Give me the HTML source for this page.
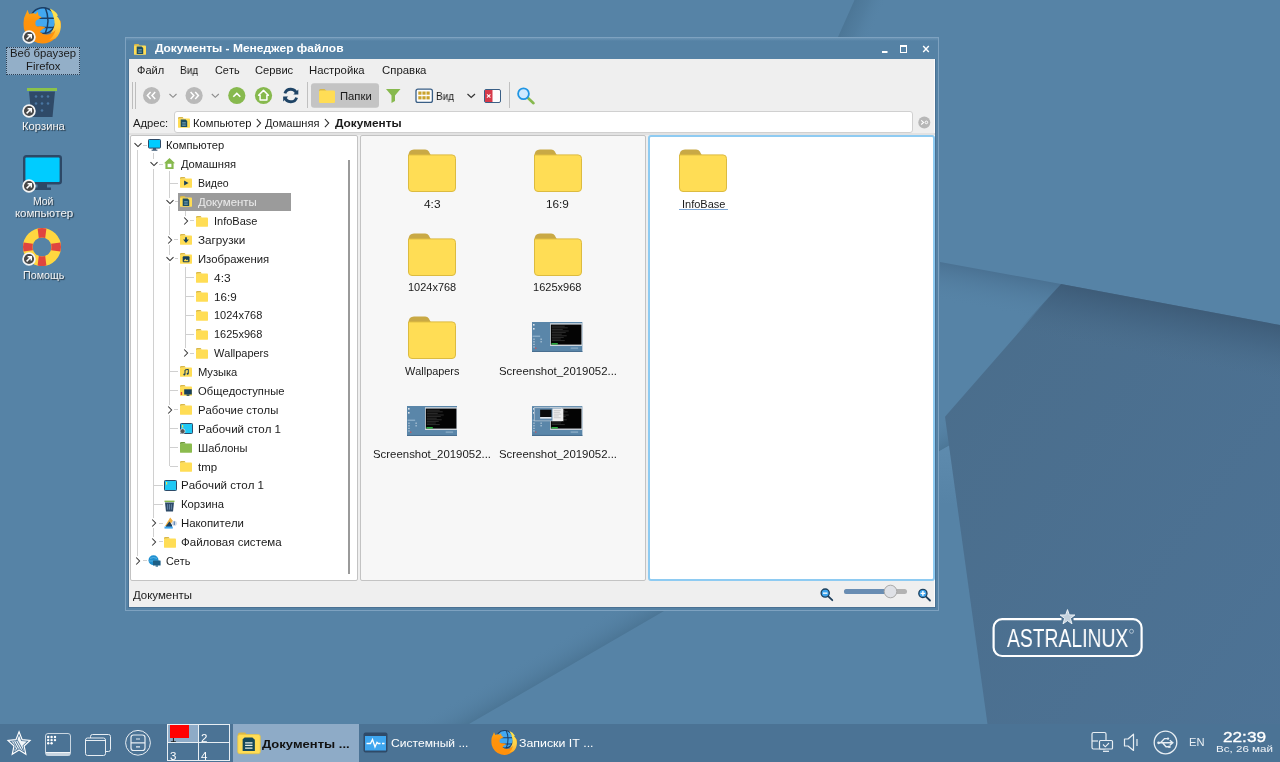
<!DOCTYPE html><html><head><meta charset="utf-8"><title>Astra Linux</title><style>

*{box-sizing:border-box;margin:0;padding:0}
html,body{width:1280px;height:762px;overflow:hidden;background:#5683a5}
body{font-family:"Liberation Sans",sans-serif;font-size:10.5px;color:#1a1a1a;position:relative;font-kerning:none}
.abs{position:absolute}
.t{position:absolute;white-space:nowrap;transform-origin:0 50%;will-change:transform}
.sh{text-shadow:1px 1px 1px rgba(0,0,0,.6)}
.win{position:absolute;left:125px;top:37px;width:814px;height:574px;background:linear-gradient(#6a93b4 0,#5582a5 3px);border:1px solid #7ea2c0}
.cont{position:absolute;left:129px;top:59px;width:806px;height:548px;background:#efefef}
.pane{position:absolute;border:1px solid #c3c3c3;border-radius:2px}
.vl{position:absolute;width:1px;background:#d0d0d0}
.hl{position:absolute;height:1px;background:#d0d0d0}

</style></head><body>
<svg width="0" height="0" style="position:absolute">
<defs>
  <linearGradient id="tailg" x1="0" y1="0" x2="0" y2="1"><stop offset="0" stop-color="#ffe650"/><stop offset=".6" stop-color="#ffd24a"/><stop offset="1" stop-color="#ffa61e"/></linearGradient>
  <linearGradient id="foxg" x1="0" y1="0" x2="0" y2="1"><stop offset="0" stop-color="#ffa616"/><stop offset=".35" stop-color="#ff930c"/><stop offset="1" stop-color="#ff900c"/></linearGradient>
  <symbol id="fold" viewBox="0 0 48 43">
    <path d="M0.5 6.5 Q0.5 0.5 6 0.5 L17.2 0.5 Q19.6 0.5 20.8 2.6 L23 6.5 L0.5 6.5 Z" fill="#c9a945"/>
    <path d="M0.5 5.9 L44 5.9 Q47.5 5.9 47.5 9.4 L47.5 39 Q47.5 42.5 44 42.5 L4 42.5 Q0.5 42.5 0.5 39 Z" fill="#ffdd55" stroke="#dcbb40" stroke-width="1"/>
  </symbol>
  <symbol id="sfold" viewBox="0 0 12 11">
    <path d="M0 1.3 Q0 0 1.3 0 L4.6 0 L5.8 1.6 L0 2 Z" fill="#d9b848"/>
    <rect x="0" y="1.4" width="12" height="9.4" rx="0.9" fill="#ffdd55"/>
  </symbol>
  <symbol id="gfold" viewBox="0 0 12 11">
    <path d="M0 1.3 Q0 0 1.3 0 L4.6 0 L5.8 1.6 L0 2 Z" fill="#6f9a3a"/>
    <rect x="0" y="1.4" width="12" height="9.4" rx="0.9" fill="#8bbb4e"/>
  </symbol>
  <symbol id="docfold" viewBox="0 0 12 11">
    <use href="#sfold"/>
    <path d="M2.7 2.6 L7.6 2.6 L9.2 4.1 L9.2 10 L2.7 10 Z" fill="#1b4d64"/>
    <path d="M4.2 5.6 H7.8 M4.2 7 H7.8 M4.2 8.4 H7.8" stroke="#7ea9b8" stroke-width="0.75"/>
  </symbol>
  <symbol id="vidfold" viewBox="0 0 12 11">
    <use href="#sfold"/>
    <path d="M4.1 3.4 L8.5 6 L4.1 8.6 Z" fill="#17405c"/>
  </symbol>
  <symbol id="dlfold" viewBox="0 0 12 11">
    <use href="#sfold"/>
    <path d="M5.1 3.2 H6.9 V5.6 H8.9 L6 8.9 L3.1 5.6 H5.1 Z" fill="#17405c"/>
  </symbol>
  <symbol id="imgfold" viewBox="0 0 12 11">
    <use href="#sfold"/>
    <rect x="2.7" y="3.2" width="6.8" height="6" rx="1" fill="#17405c"/>
    <path d="M3.5 8.3 L5.3 5.8 L6.6 7.2 L7.4 6.5 L8.7 8.3 Z" fill="#ffdd55"/>
  </symbol>
  <symbol id="musfold" viewBox="0 0 12 11">
    <use href="#sfold"/>
    <path d="M5 4 L8.3 3.3 V7.6 M5 4 V8.4" stroke="#17405c" stroke-width="1" fill="none"/>
    <circle cx="4.3" cy="8.5" r="1" fill="#17405c"/><circle cx="7.6" cy="7.7" r="1" fill="#17405c"/>
  </symbol>
  <symbol id="pubfold" viewBox="0 0 12 11">
    <use href="#sfold"/>
    <rect x="4.2" y="4.3" width="7.6" height="5.2" fill="#17405c"/>
    <rect x="6.6" y="9.5" width="2.8" height="1.3" fill="#17405c"/>
    <rect x="0.8" y="7" width="1.3" height="3" fill="#e0463c"/>
  </symbol>
  <symbol id="monitor" viewBox="0 0 13 12">
    <rect x="0.5" y="0.5" width="12" height="8.6" rx="0.8" fill="#00ccff" stroke="#2d4a68" stroke-width="1"/>
    <rect x="5" y="9.2" width="3" height="1.6" fill="#2d4a68"/>
    <rect x="3.6" y="10.6" width="5.8" height="1.1" fill="#2d4a68"/>
  </symbol>
  <symbol id="house" viewBox="0 0 11 11">
    <path d="M5.5 0 L11 5.2 H9.6 V11 H1.4 V5.2 H0 Z" fill="#87b94e"/>
    <rect x="3.6" y="5.8" width="3.8" height="3.4" fill="#fff"/>
  </symbol>
  <symbol id="desk" viewBox="0 0 13 11">
    <rect x="0.5" y="0.5" width="12" height="10" rx="0.8" fill="#1ec8f5" stroke="#2d4a68" stroke-width="1"/>
    <rect x="2" y="2" width="1.2" height="2.6" fill="#f6e04a"/>
  </symbol>
  <symbol id="deskl" viewBox="0 0 13 11">
    <use href="#desk"/>
    <circle cx="2.6" cy="8.2" r="2.5" fill="#555" stroke="#eee" stroke-width=".7"/>
  </symbol>
  <symbol id="trashs" viewBox="0 0 11 12">
    <rect x="0.5" y="0.6" width="10" height="1.5" fill="#87b94e"/>
    <path d="M1 2.6 H10 L9 11.5 H2 Z" fill="#2d4a68"/>
    <path d="M3.6 4.2 V9.6 M5.5 4.2 V9.6 M7.4 4.2 V9.6" stroke="#7d9cc0" stroke-width="0.7"/>
  </symbol>
  <symbol id="drives" viewBox="0 0 13 12">
    <path d="M1 9 L6.2 0.6 L9 4 L4 10 Z" fill="#f0b040"/>
    <path d="M2 9 L5.5 4.5 L8 8 L8 10 L2 10 Z" fill="#1d3f5c"/>
    <path d="M0.5 9.5 H8.8 V11.6 H0.5 Z" fill="#3ea6ef"/>
    <circle cx="10.3" cy="6.3" r="2.6" fill="#d4dbe4"/>
    <rect x="9.7" y="4.4" width="1.2" height="3.6" fill="#5b86b8"/>
  </symbol>
  <symbol id="net" viewBox="0 0 13 12">
    <circle cx="5.5" cy="5.2" r="5" fill="#1d8fd0"/>
    <path d="M2 3.4 Q5.5 1.6 9 3.4 M1 6 H10" stroke="#6fc0ec" stroke-width="0.7" fill="none"/>
    <rect x="5" y="5.4" width="7.6" height="5" rx="0.5" fill="#1d5f86"/>
    <rect x="7.6" y="10.4" width="2.4" height="1.2" fill="#1d5f86"/>
  </symbol>
  <symbol id="short" viewBox="0 0 14 14">
    <circle cx="7" cy="7" r="5.9" fill="#484848" stroke="#f4f4f4" stroke-width="1.7"/>
    <path d="M4.6 9.4 L9 5 M5.6 4.7 H9.3 V8.4" stroke="#fff" stroke-width="1.5" fill="none"/>
  </symbol>
  <symbol id="ffox" viewBox="0 0 38 37">
    <circle cx="20" cy="13.6" r="12.9" fill="#42a8f0"/>
    <path d="M8 11.2 H32.5 M9 20.4 H31.5 M22.3 0.8 Q27.6 13.6 22.3 26.4" stroke="#1c3f66" stroke-width="1.5" fill="none"/>
    <circle cx="20" cy="13.6" r="12.9" fill="none" stroke="#1c3f66" stroke-width="1.5"/>
    <path d="M4.3 2.8 L6.3 7.2 Q9.5 5.6 13 7 L14.6 4.6 L15.6 8.6 L18.6 10.2 L15 12.4 Q12.4 13 12.4 16 Q12.2 19.4 15 19.4 Q19 19 22.6 20.6 Q19 21.8 16.6 24.8 Q21 29 27 27 Q32 25 34 19 Q35.5 15 34 10.5 L37.6 14 Q38.6 24 32 31.5 Q25 38 15 36 Q4 33 1 22 Q-0.5 12 2.5 7.5 Q3.8 5.5 4.3 2.8 Z" fill="url(#foxg)"/>
    <path d="M26.8 1.6 Q32 3.5 35 8.5 L33.8 9 Q38 13 37.8 20 Q37.5 27 32.5 31.5 L26 33.2 Q31 29 32.6 23 Q30.5 25.6 27.5 26.4 Q32.6 20 31.4 13.4 Q30.8 7.5 26.8 1.6 Z" fill="url(#tailg)"/>
  </symbol>
  <symbol id="thumb0" viewBox="0 0 51 30.4" preserveAspectRatio="none">
    <rect width="51" height="30.4" fill="#5a86a9"/>
    <rect x="0" y="29" width="51" height="1.4" fill="#486e90"/>
    <rect x="18.2" y="1.2" width="32.3" height="22.8" fill="#cfd6dd"/>
    <rect x="19" y="2.6" width="30.8" height="20" fill="#040404"/>
    <g stroke="#4a4a4a" stroke-width=".6"><path d="M20 4.2 H33 M20 5.8 H36 M20 7.4 H31 M20 9 H37 M20 10.6 H34 M20 12.2 H30 M20 13.8 H35 M20 15.4 H32 M20 17 H29 M20 18.6 H33"/></g>
    <rect x="19.6" y="21.2" width="6.4" height="1.3" fill="#35d04c"/>
    <rect x="39" y="25.3" width="7.5" height="1.8" fill="#7fa3bf"/>
    <g fill="#dfe6ec"><rect x="1" y="2" width="1.6" height="1.6"/><rect x="1" y="6" width="1.6" height="1.6"/></g>
    <rect x="0.6" y="13.6" width="7.6" height="1.3" fill="#8fb0cb"/>
    <g fill="#c8d7e4"><rect x="1.4" y="16.6" width="1.2" height="1.2"/><rect x="1.4" y="19.2" width="1.2" height="1.2"/><rect x="1.4" y="21.8" width="1.2" height="1.2"/><rect x="1.4" y="24.4" width="1.2" height="1.2"/><rect x="8.6" y="16.6" width="1.2" height="1.2"/><rect x="8.6" y="19.2" width="1.2" height="1.2"/></g>
    <rect x="3.2" y="25.6" width="1.2" height="1.2" fill="#e04a4a"/>
  </symbol>
  <symbol id="thumb2" viewBox="0 0 51 30.4">
    <use href="#thumb0"/>
    <rect x="2" y="1.2" width="28" height="14" fill="#c9d3dd"/>
    <rect x="2.6" y="2" width="26.8" height="12.6" fill="#5f88aa"/>
    <rect x="8.2" y="3.6" width="11.4" height="7.4" fill="#0a0a0a"/>
    <rect x="8.2" y="11" width="11.4" height="1.6" fill="#e4e8ec"/>
    <rect x="20.6" y="2.4" width="11" height="12.6" fill="#eeeeee"/>
    <g stroke="#aaa" stroke-width=".5"><path d="M22 4.5 H29 M22 6.3 H28 M22 8.1 H29.5 M22 9.9 H27 M22 11.7 H29"/></g>
  </symbol>
</defs>
</svg>

<svg class="abs" style="left:0;top:0" width="1280" height="762" viewBox="0 0 1280 762">
<defs>
<linearGradient id="pg" x1="0" y1="0" x2="1" y2="1"><stop offset="0" stop-color="#4a6d8b"/><stop offset="1" stop-color="#4d7396"/></linearGradient>
<linearGradient id="sh" gradientUnits="userSpaceOnUse" x1="1110" y1="293" x2="1100" y2="347"><stop offset="0" stop-color="#3d5b77" stop-opacity=".95"/><stop offset=".4" stop-color="#426381" stop-opacity=".7"/><stop offset="1" stop-color="#4a6d8b" stop-opacity="0"/></linearGradient>
<linearGradient id="sh2" gradientUnits="userSpaceOnUse" x1="1000" y1="273" x2="993" y2="311"><stop offset="0" stop-color="#4a7192" stop-opacity=".95"/><stop offset="1" stop-color="#5683a6" stop-opacity="0"/></linearGradient>
<linearGradient id="sh3" gradientUnits="userSpaceOnUse" x1="846" y1="18" x2="873.4" y2="30.2"><stop offset="0" stop-color="#4b7595" stop-opacity=".95"/><stop offset=".45" stop-color="#4f7a9b" stop-opacity=".7"/><stop offset="1" stop-color="#5683a6" stop-opacity="0"/></linearGradient>
<linearGradient id="lt1" x1="0" y1="0" x2="0" y2="1"><stop offset="0" stop-color="#5e8bae"/><stop offset="1" stop-color="#5683a6"/></linearGradient>
<linearGradient id="sh4" gradientUnits="userSpaceOnUse" x1="565" y1="668.3" x2="551" y2="644.1"><stop offset="0" stop-color="#4b7595" stop-opacity=".95"/><stop offset="1" stop-color="#5683a6" stop-opacity="0"/></linearGradient>
</defs>
<rect width="1280" height="762" fill="#5683a6"/>
<polygon points="854.5,0 838,37 874,37 890.5,0" fill="url(#sh3)"/>
<polygon points="400,764 962,438.2 948,414 386,739.8" fill="url(#sh4)"/>
<polygon points="936,453.1 951,444.4 958,505 936,505" fill="url(#lt1)"/>
<polygon points="940,262 1061,284 945,416.8 940,420" fill="url(#sh2)"/>
<polygon points="1061,284 1280,325 1280,762 992.7,762 945,416.8" fill="url(#pg)"/>
<polygon points="1061,284 1280,325 1280,390 1000,350" fill="url(#sh)"/>
</svg>
<svg class="abs" style="left:23px;top:6.5px" width="38" height="37"><use href="#ffox"/></svg>
<svg class="abs" style="left:22.4px;top:30.3px" width="14" height="14"><use href="#short"/></svg>
<div class="abs" style="left:6px;top:47px;width:73.8px;height:28px;background:#93afc8;border:1px dotted #2a3f55"></div>
<div class="t" style="left:10.20px;top:46.16px;font-size:10.5px;line-height:14px;height:14px;color:#1a1a1a;transform:scaleX(1.0780);">Веб браузер</div>
<div class="t" style="left:25.75px;top:59.36px;font-size:10.5px;line-height:14px;height:14px;color:#1a1a1a;transform:scaleX(1.0752);">Firefox</div>
<svg class="abs" style="left:27px;top:87px" width="31" height="31" viewBox="0 0 31 31">
<rect x="0" y="1" width="30" height="3" fill="#8bc34a"/>
<path d="M2 4.5 H28 L25.5 30 H4.5 Z" fill="#2f4a68"/>
<g fill="#4a76a2"><circle cx="9" cy="9.5" r="1.3"/><circle cx="15" cy="9.5" r="1.3"/><circle cx="21" cy="9.5" r="1.3"/><circle cx="9" cy="16.5" r="1.3"/><circle cx="15" cy="16.5" r="1.3"/><circle cx="21" cy="16.5" r="1.3"/><circle cx="15" cy="23.5" r="1.3"/></g>
</svg>
<svg class="abs" style="left:22.4px;top:104px" width="14" height="14"><use href="#short"/></svg>
<div class="t" style="left:21.95px;top:119.36px;font-size:10.5px;line-height:14px;height:14px;color:#f4f4f4;transform:scaleX(1.0677);text-shadow:1px 1px 1px rgba(0,0,0,.6);">Корзина</div>
<svg class="abs" style="left:23px;top:155px" width="39" height="36" viewBox="0 0 39 36">
<rect x="1.2" y="1.2" width="36.6" height="27" rx="2" fill="#00ccff" stroke="#2d4866" stroke-width="2.4"/>
<rect x="14.5" y="29" width="9.5" height="4" fill="#2d4866"/>
<rect x="11.5" y="32.5" width="16.5" height="2.5" fill="#2d4866"/>
</svg>
<svg class="abs" style="left:22.4px;top:178.6px" width="14" height="14"><use href="#short"/></svg>
<div class="t" style="left:33.00px;top:193.96px;font-size:10.5px;line-height:14px;height:14px;color:#f4f4f4;transform:scaleX(1.0015);text-shadow:1px 1px 1px rgba(0,0,0,.6);">Мой</div>
<div class="t" style="left:14.60px;top:206.16px;font-size:10.5px;line-height:14px;height:14px;color:#f4f4f4;transform:scaleX(1.0956);text-shadow:1px 1px 1px rgba(0,0,0,.6);">компьютер</div>
<svg class="abs" style="left:22px;top:227px" width="40" height="40" viewBox="0 0 40 40">
<circle cx="20" cy="20" r="14.2" fill="none" stroke="#ffd740" stroke-width="9.6"/>
<g fill="#e0453f"><path d="M15.6 1.6 Q20 0.4 24.4 1.6 L23.2 10.9 Q20 10.2 16.8 10.9 Z"/><path d="M15.6 38.4 Q20 39.6 24.4 38.4 L23.2 29.1 Q20 29.8 16.8 29.1 Z"/><path d="M1.6 15.6 Q0.4 20 1.6 24.4 L10.9 23.2 Q10.2 20 10.9 16.8 Z"/><path d="M38.4 15.6 Q39.6 20 38.4 24.4 L29.1 23.2 Q29.8 20 29.1 16.8 Z"/></g>
</svg>
<svg class="abs" style="left:22.2px;top:252.2px" width="14" height="14"><use href="#short"/></svg>
<div class="t" style="left:22.95px;top:267.56px;font-size:10.5px;line-height:14px;height:14px;color:#f4f4f4;transform:scaleX(1.0184);text-shadow:1px 1px 1px rgba(0,0,0,.6);">Помощь</div>
<div class="win"></div>
<svg class="abs" style="left:134px;top:44px" width="12" height="11"><use href="#docfold"/></svg>
<div class="t" style="left:154.80px;top:40.76px;font-size:10.5px;line-height:14px;height:14px;font-weight:bold;color:#fff;transform:scaleX(1.1395);">Документы - Менеджер файлов</div>
<svg class="abs" style="left:878px;top:42px" width="56" height="14" viewBox="0 0 56 14">
<rect x="4" y="9" width="5.5" height="2" fill="#fff"/>
<rect x="22.5" y="4" width="6" height="6.5" fill="none" stroke="#fff" stroke-width="1"/><rect x="22" y="3" width="7" height="2" fill="#fff"/>
<path d="M45.2 4 L50.8 10 M50.8 4 L45.2 10" stroke="#fff" stroke-width="1.4"/>
</svg>
<div class="abs" style="left:128px;top:59px;width:808px;height:549px;background:#4a7193"></div>
<div class="cont"></div>
<div class="abs" style="left:934px;top:59px;width:1px;height:548px;background:#fbfbfb"></div>
<div class="t" style="left:137.00px;top:62.76px;font-size:10.5px;line-height:14px;height:14px;color:#1a1a1a;transform:scaleX(1.0537);">Файл</div>
<div class="t" style="left:180.00px;top:62.76px;font-size:10.5px;line-height:14px;height:14px;color:#1a1a1a;transform:scaleX(0.9634);">Вид</div>
<div class="t" style="left:214.50px;top:62.76px;font-size:10.5px;line-height:14px;height:14px;color:#1a1a1a;transform:scaleX(1.0363);">Сеть</div>
<div class="t" style="left:254.70px;top:62.76px;font-size:10.5px;line-height:14px;height:14px;color:#1a1a1a;transform:scaleX(1.0625);">Сервис</div>
<div class="t" style="left:309.20px;top:62.76px;font-size:10.5px;line-height:14px;height:14px;color:#1a1a1a;transform:scaleX(1.0776);">Настройка</div>
<div class="t" style="left:381.50px;top:62.76px;font-size:10.5px;line-height:14px;height:14px;color:#1a1a1a;transform:scaleX(1.0852);">Справка</div>
<div class="abs" style="left:132px;top:82px;width:1px;height:27px;background:#bdbdbd"></div>
<div class="abs" style="left:135px;top:82px;width:1px;height:27px;background:#bdbdbd"></div>
<svg class="abs" style="left:140px;top:80px" width="400" height="32" viewBox="140 80 400 32">
<circle cx="151.6" cy="95.5" r="8.6" fill="#b9b9b9"/>
<path d="M150.6 92 L147.4 95.5 L150.6 99 M155.2 92 L152 95.5 L155.2 99" stroke="#fff" stroke-width="1.5" fill="none"/>
<path d="M169.5 94 L173 97.3 L176.5 94" stroke="#8c8c8c" stroke-width="1.1" fill="none"/>
<circle cx="194.1" cy="95.5" r="8.6" fill="#b9b9b9"/>
<path d="M190.6 92 L193.8 95.5 L190.6 99 M195.2 92 L198.4 95.5 L195.2 99" stroke="#fff" stroke-width="1.5" fill="none"/>
<path d="M211.8 94 L215.3 97.3 L218.8 94" stroke="#8c8c8c" stroke-width="1.1" fill="none"/>
<circle cx="236.8" cy="95.5" r="8.6" fill="#87b94e"/>
<path d="M233.3 96.8 L236.8 93.4 L240.3 96.8" stroke="#fff" stroke-width="1.6" fill="none"/>
<circle cx="263.5" cy="95.5" r="8.6" fill="#87b94e"/>
<path d="M263.5 90.4 L268.4 95.2 H266.9 V100 H260.1 V95.2 H258.6 Z" fill="none" stroke="#fff" stroke-width="1.5" stroke-linejoin="round"/>
<path d="M296.6 93.8 A6.1 6.1 0 0 0 284.9 93.4" stroke="#1f4466" stroke-width="2.9" fill="none"/>
<path d="M284.9 97.2 A6.1 6.1 0 0 0 296.6 97.6" stroke="#1f4466" stroke-width="2.9" fill="none"/>
<path d="M298.3 89.6 V94.6 H293.3 Z" fill="#1f4466"/>
<path d="M283.2 101.4 V96.4 H288.2 Z" fill="#1f4466"/>
<rect x="307" y="82" width="1" height="26" fill="#c0c0c0"/>
<rect x="311" y="83.2" width="68" height="24.5" rx="3" fill="#c4c4c4"/>
<path d="M319 90.5 Q319 89 320.5 89 L324.5 89 L326.5 91 L319 91.5 Z" fill="#d9b848"/>
<rect x="319" y="90.6" width="16" height="12.4" rx="1.2" fill="#ffdd55"/>
<path d="M386 89 H400.5 L395 95.5 V101 L391.5 103 V95.5 Z" fill="#87b94e"/>
<rect x="416" y="89.2" width="16.4" height="13.2" rx="2" fill="#fdfdfd" stroke="#3a5f86" stroke-width="1.3"/>
<g fill="#caa22c"><rect x="418.3" y="91.5" width="3.2" height="3.2"/><rect x="422.4" y="91.5" width="3.2" height="3.2"/><rect x="426.5" y="91.5" width="3.2" height="3.2"/><rect x="418.3" y="96.2" width="3.2" height="3.2"/><rect x="422.4" y="96.2" width="3.2" height="3.2"/><rect x="426.5" y="96.2" width="3.2" height="3.2"/></g>
<path d="M467.5 94 L471.2 97.5 L475 94" stroke="#333" stroke-width="1.2" fill="none"/>
<rect x="484.5" y="89.5" width="16" height="13" rx="1.5" fill="#fdfdfd" stroke="#3a5f86" stroke-width="1"/>
<rect x="485" y="90" width="7.5" height="12" fill="#d63a4a"/>
<path d="M487 94.3 L490.4 97.7 M490.4 94.3 L487 97.7" stroke="#fff" stroke-width="1.1"/>
<rect x="509" y="82" width="1" height="26" fill="#c0c0c0"/>
<path d="M527.5 97.5 L533.5 103.2" stroke="#87b94e" stroke-width="2.6" stroke-linecap="round"/>
<circle cx="523.5" cy="93.8" r="5.4" fill="#cfeaff" stroke="#2196e3" stroke-width="1.8"/>
</svg>

<div class="t" style="left:339.50px;top:88.56px;font-size:10.5px;line-height:14px;height:14px;color:#1a1a1a;transform:scaleX(1.0734);">Папки</div>
<div class="t" style="left:436.00px;top:88.56px;font-size:10.5px;line-height:14px;height:14px;color:#1a1a1a;transform:scaleX(0.9581);">Вид</div>
<div class="t" style="left:133.20px;top:115.56px;font-size:10.5px;line-height:14px;height:14px;color:#1a1a1a;transform:scaleX(1.0675);">Адрес:</div>
<div class="abs" style="left:174px;top:111px;width:739px;height:22px;background:#fff;border:1px solid #d0d0d0;border-radius:3px"></div>
<svg class="abs" style="left:178px;top:117px" width="12" height="11"><use href="#docfold"/></svg>
<div class="t" style="left:192.50px;top:115.56px;font-size:10.5px;line-height:14px;height:14px;color:#1a1a1a;transform:scaleX(1.0673);">Компьютер</div>
<svg class="abs" style="left:254px;top:116px" width="10" height="14" viewBox="254 116 10 14"><path d="M256.8 119 L260.6 123.1 L256.8 127.2" stroke="#2a2a2a" stroke-width="1.1" fill="none"/></svg>
<div class="t" style="left:264.50px;top:115.56px;font-size:10.5px;line-height:14px;height:14px;color:#1a1a1a;transform:scaleX(1.0538);">Домашняя</div>
<svg class="abs" style="left:322px;top:116px" width="10" height="14" viewBox="322 116 10 14"><path d="M324.9 119 L328.7 123.1 L324.9 127.2" stroke="#2a2a2a" stroke-width="1.1" fill="none"/></svg>
<div class="t" style="left:335.00px;top:115.56px;font-size:10.5px;line-height:14px;height:14px;font-weight:bold;color:#1a1a1a;transform:scaleX(1.1298);">Документы</div>
<svg class="abs" style="left:918px;top:116px" width="13" height="13" viewBox="0 0 13 13"><circle cx="6.3" cy="6.4" r="6" fill="#b7b7b7"/><path d="M3.2 4.3 L5.6 6.4 L3.2 8.5" stroke="#fff" stroke-width="1.1" fill="none"/><circle cx="8.4" cy="6.4" r="1.3" fill="none" stroke="#fff" stroke-width="1"/></svg>
<div class="abs" style="left:129px;top:132.5px;width:806px;height:2px;background:#e2e2e2"></div>
<div class="pane" style="left:130px;top:135px;width:228px;height:446px;background:#fff"></div>
<div class="pane" style="left:360px;top:135px;width:286px;height:446px;background:#f7f7f7"></div>
<div class="pane" style="left:648px;top:135px;width:287px;height:446px;background:#fff;border:2px solid #8ecbf2;border-radius:3px"></div>
<div class="abs" style="left:348px;top:160px;width:2px;height:414px;background:#9a9a9a"></div>
<div class="vl" style="left:137.1px;top:150.3px;height:410.5800000000001px"></div>
<div class="vl" style="left:153.0px;top:169.19px;height:372.8px"></div>
<div class="vl" style="left:153.0px;top:153.3px;height:6px"></div>
<div class="vl" style="left:168.9px;top:171.19px;height:295.24px"></div>
<div class="vl" style="left:184.8px;top:210.97000000000003px;height:6px"></div>
<div class="vl" style="left:184.8px;top:266.64px;height:82.45000000000005px"></div>
<div class="hl" style="left:142.6px;top:144.80px;width:4px"></div>
<svg class="abs" style="left:133.3px;top:141.30px;background:#fff;" width="10" height="8" viewBox="0 0 10 8"><path d="M1.5 2.2 L5 5.6 L8.5 2.2" stroke="#333" stroke-width="1.05" fill="none"/></svg>
<svg class="abs" style="left:148.2px;top:139.10px" width="13" height="12"><use href="#monitor"/></svg>
<div class="t" style="left:165.80px;top:138.46px;font-size:10.5px;line-height:14px;height:14px;color:#1a1a1a;transform:scaleX(1.0636);">Компьютер</div>
<div class="hl" style="left:158.5px;top:163.69px;width:4px"></div>
<svg class="abs" style="left:149.2px;top:160.19px;background:#fff;" width="10" height="8" viewBox="0 0 10 8"><path d="M1.5 2.2 L5 5.6 L8.5 2.2" stroke="#333" stroke-width="1.05" fill="none"/></svg>
<svg class="abs" style="left:164.1px;top:158.49px" width="11" height="11"><use href="#house"/></svg>
<div class="t" style="left:181.10px;top:157.35px;font-size:10.5px;line-height:14px;height:14px;color:#1a1a1a;transform:scaleX(1.0673);">Домашняя</div>
<div class="hl" style="left:169.9px;top:182.58px;width:8.5px"></div>
<svg class="abs" style="left:180.0px;top:177.38px" width="12" height="11"><use href="#vidfold"/></svg>
<div class="t" style="left:197.60px;top:176.24px;font-size:10.5px;line-height:14px;height:14px;color:#1a1a1a;transform:scaleX(0.9944);">Видео</div>
<div class="abs" style="left:178px;top:192.57px;width:113px;height:18.6px;background:#9b9b9b"></div>
<div class="hl" style="left:174.4px;top:201.47px;width:4px"></div>
<svg class="abs" style="left:165.1px;top:197.97px;background:#fff;" width="10" height="8" viewBox="0 0 10 8"><path d="M1.5 2.2 L5 5.6 L8.5 2.2" stroke="#333" stroke-width="1.05" fill="none"/></svg>
<svg class="abs" style="left:180.0px;top:196.27px" width="12" height="11"><use href="#docfold"/></svg>
<div class="t" style="left:197.60px;top:195.13px;font-size:10.5px;line-height:14px;height:14px;color:#ececec;transform:scaleX(1.0883);">Документы</div>
<div class="hl" style="left:190.3px;top:220.36px;width:4px"></div>
<svg class="abs" style="left:182.0px;top:215.86px;background:#fff;" width="8" height="10" viewBox="0 0 8 10"><path d="M2.2 1.5 L5.6 5 L2.2 8.5" stroke="#333" stroke-width="1.05" fill="none"/></svg>
<svg class="abs" style="left:195.9px;top:215.56px" width="12" height="11"><use href="#sfold"/></svg>
<div class="t" style="left:213.50px;top:214.02px;font-size:10.5px;line-height:14px;height:14px;color:#1a1a1a;transform:scaleX(1.0472);">InfoBase</div>
<div class="hl" style="left:174.4px;top:239.25px;width:4px"></div>
<svg class="abs" style="left:166.1px;top:234.75px;background:#fff;" width="8" height="10" viewBox="0 0 8 10"><path d="M2.2 1.5 L5.6 5 L2.2 8.5" stroke="#333" stroke-width="1.05" fill="none"/></svg>
<svg class="abs" style="left:180.0px;top:234.05px" width="12" height="11"><use href="#dlfold"/></svg>
<div class="t" style="left:197.60px;top:232.91px;font-size:10.5px;line-height:14px;height:14px;color:#1a1a1a;transform:scaleX(1.1147);">Загрузки</div>
<div class="hl" style="left:174.4px;top:258.14px;width:4px"></div>
<svg class="abs" style="left:165.1px;top:254.64px;background:#fff;" width="10" height="8" viewBox="0 0 10 8"><path d="M1.5 2.2 L5 5.6 L8.5 2.2" stroke="#333" stroke-width="1.05" fill="none"/></svg>
<svg class="abs" style="left:180.0px;top:252.94px" width="12" height="11"><use href="#imgfold"/></svg>
<div class="t" style="left:197.60px;top:251.80px;font-size:10.5px;line-height:14px;height:14px;color:#1a1a1a;transform:scaleX(1.0760);">Изображения</div>
<div class="hl" style="left:185.8px;top:277.03px;width:8.5px"></div>
<svg class="abs" style="left:195.9px;top:272.23px" width="12" height="11"><use href="#sfold"/></svg>
<div class="t" style="left:213.50px;top:270.69px;font-size:10.5px;line-height:14px;height:14px;color:#1a1a1a;transform:scaleX(1.1374);">4:3</div>
<div class="hl" style="left:185.8px;top:295.92px;width:8.5px"></div>
<svg class="abs" style="left:195.9px;top:291.12px" width="12" height="11"><use href="#sfold"/></svg>
<div class="t" style="left:213.50px;top:289.58px;font-size:10.5px;line-height:14px;height:14px;color:#1a1a1a;transform:scaleX(1.1060);">16:9</div>
<div class="hl" style="left:185.8px;top:314.81px;width:8.5px"></div>
<svg class="abs" style="left:195.9px;top:310.01px" width="12" height="11"><use href="#sfold"/></svg>
<div class="t" style="left:213.50px;top:308.47px;font-size:10.5px;line-height:14px;height:14px;color:#1a1a1a;transform:scaleX(1.0472);">1024x768</div>
<div class="hl" style="left:185.8px;top:333.70px;width:8.5px"></div>
<svg class="abs" style="left:195.9px;top:328.90px" width="12" height="11"><use href="#sfold"/></svg>
<div class="t" style="left:213.50px;top:327.36px;font-size:10.5px;line-height:14px;height:14px;color:#1a1a1a;transform:scaleX(1.0472);">1625x968</div>
<div class="hl" style="left:190.3px;top:352.59px;width:4px"></div>
<svg class="abs" style="left:182.0px;top:348.09px;background:#fff;" width="8" height="10" viewBox="0 0 8 10"><path d="M2.2 1.5 L5.6 5 L2.2 8.5" stroke="#333" stroke-width="1.05" fill="none"/></svg>
<svg class="abs" style="left:195.9px;top:347.79px" width="12" height="11"><use href="#sfold"/></svg>
<div class="t" style="left:213.50px;top:346.25px;font-size:10.5px;line-height:14px;height:14px;color:#1a1a1a;transform:scaleX(1.0416);">Wallpapers</div>
<div class="hl" style="left:169.9px;top:371.48px;width:8.5px"></div>
<svg class="abs" style="left:180.0px;top:366.28px" width="12" height="11"><use href="#musfold"/></svg>
<div class="t" style="left:197.60px;top:365.14px;font-size:10.5px;line-height:14px;height:14px;color:#1a1a1a;transform:scaleX(1.0663);">Музыка</div>
<div class="hl" style="left:169.9px;top:390.37px;width:8.5px"></div>
<svg class="abs" style="left:180.0px;top:385.17px" width="12" height="11"><use href="#pubfold"/></svg>
<div class="t" style="left:197.60px;top:384.03px;font-size:10.5px;line-height:14px;height:14px;color:#1a1a1a;transform:scaleX(1.0698);">Общедоступные</div>
<div class="hl" style="left:174.4px;top:409.26px;width:4px"></div>
<svg class="abs" style="left:166.1px;top:404.76px;background:#fff;" width="8" height="10" viewBox="0 0 8 10"><path d="M2.2 1.5 L5.6 5 L2.2 8.5" stroke="#333" stroke-width="1.05" fill="none"/></svg>
<svg class="abs" style="left:180.0px;top:404.46px" width="12" height="11"><use href="#sfold"/></svg>
<div class="t" style="left:197.60px;top:402.92px;font-size:10.5px;line-height:14px;height:14px;color:#1a1a1a;transform:scaleX(1.0799);">Рабочие столы</div>
<div class="hl" style="left:169.9px;top:428.15px;width:8.5px"></div>
<svg class="abs" style="left:180.0px;top:422.95px" width="13" height="11"><use href="#deskl"/></svg>
<div class="t" style="left:197.60px;top:421.81px;font-size:10.5px;line-height:14px;height:14px;color:#1a1a1a;transform:scaleX(1.0982);">Рабочий стол 1</div>
<div class="hl" style="left:169.9px;top:447.04px;width:8.5px"></div>
<svg class="abs" style="left:180.0px;top:442.24px" width="12" height="11"><use href="#gfold"/></svg>
<div class="t" style="left:197.60px;top:440.70px;font-size:10.5px;line-height:14px;height:14px;color:#1a1a1a;transform:scaleX(1.0552);">Шаблоны</div>
<div class="hl" style="left:169.9px;top:465.93px;width:8.5px"></div>
<svg class="abs" style="left:180.0px;top:461.13px" width="12" height="11"><use href="#sfold"/></svg>
<div class="t" style="left:197.60px;top:459.59px;font-size:10.5px;line-height:14px;height:14px;color:#1a1a1a;transform:scaleX(1.0913);">tmp</div>
<div class="hl" style="left:154.0px;top:484.82px;width:8.5px"></div>
<svg class="abs" style="left:164.1px;top:479.62px" width="13" height="11"><use href="#desk"/></svg>
<div class="t" style="left:181.10px;top:478.48px;font-size:10.5px;line-height:14px;height:14px;color:#1a1a1a;transform:scaleX(1.0982);">Рабочий стол 1</div>
<div class="hl" style="left:154.0px;top:503.71px;width:8.5px"></div>
<svg class="abs" style="left:164.1px;top:500.01px" width="11" height="12"><use href="#trashs"/></svg>
<div class="t" style="left:181.10px;top:497.37px;font-size:10.5px;line-height:14px;height:14px;color:#1a1a1a;transform:scaleX(1.0702);">Корзина</div>
<div class="hl" style="left:158.5px;top:522.60px;width:4px"></div>
<svg class="abs" style="left:150.2px;top:518.10px;background:#fff;" width="8" height="10" viewBox="0 0 8 10"><path d="M2.2 1.5 L5.6 5 L2.2 8.5" stroke="#333" stroke-width="1.05" fill="none"/></svg>
<svg class="abs" style="left:164.1px;top:516.90px" width="13" height="12"><use href="#drives"/></svg>
<div class="t" style="left:181.10px;top:516.26px;font-size:10.5px;line-height:14px;height:14px;color:#1a1a1a;transform:scaleX(1.0850);">Накопители</div>
<div class="hl" style="left:158.5px;top:541.49px;width:4px"></div>
<svg class="abs" style="left:150.2px;top:536.99px;background:#fff;" width="8" height="10" viewBox="0 0 8 10"><path d="M2.2 1.5 L5.6 5 L2.2 8.5" stroke="#333" stroke-width="1.05" fill="none"/></svg>
<svg class="abs" style="left:164.1px;top:536.69px" width="12" height="11"><use href="#sfold"/></svg>
<div class="t" style="left:181.10px;top:535.15px;font-size:10.5px;line-height:14px;height:14px;color:#1a1a1a;transform:scaleX(1.0969);">Файловая система</div>
<div class="hl" style="left:142.6px;top:560.38px;width:4px"></div>
<svg class="abs" style="left:134.3px;top:555.88px;background:#fff;" width="8" height="10" viewBox="0 0 8 10"><path d="M2.2 1.5 L5.6 5 L2.2 8.5" stroke="#333" stroke-width="1.05" fill="none"/></svg>
<svg class="abs" style="left:148.2px;top:554.68px" width="13" height="12"><use href="#net"/></svg>
<div class="t" style="left:165.80px;top:554.04px;font-size:10.5px;line-height:14px;height:14px;color:#1a1a1a;transform:scaleX(1.0277);">Сеть</div>
<svg class="abs" style="left:408.2px;top:149.4px" width="48" height="43"><use href="#fold"/></svg>
<div class="t" style="left:423.95px;top:197.06px;font-size:10.5px;line-height:14px;height:14px;color:#1a1a1a;transform:scaleX(1.1305);">4:3</div>
<svg class="abs" style="left:533.5px;top:149.4px" width="48" height="43"><use href="#fold"/></svg>
<div class="t" style="left:546.05px;top:197.06px;font-size:10.5px;line-height:14px;height:14px;color:#1a1a1a;transform:scaleX(1.1207);">16:9</div>
<svg class="abs" style="left:408.2px;top:232.8px" width="48" height="43"><use href="#fold"/></svg>
<div class="t" style="left:408.10px;top:280.06px;font-size:10.5px;line-height:14px;height:14px;color:#1a1a1a;transform:scaleX(1.0450);">1024x768</div>
<svg class="abs" style="left:533.5px;top:232.8px" width="48" height="43"><use href="#fold"/></svg>
<div class="t" style="left:533.30px;top:280.06px;font-size:10.5px;line-height:14px;height:14px;color:#1a1a1a;transform:scaleX(1.0494);">1625x968</div>
<svg class="abs" style="left:408.2px;top:316.1px" width="48" height="43"><use href="#fold"/></svg>
<div class="t" style="left:405.20px;top:363.56px;font-size:10.5px;line-height:14px;height:14px;color:#1a1a1a;transform:scaleX(1.0359);">Wallpapers</div>
<svg class="abs" style="left:532.2px;top:322px" width="50.6" height="30.4"><use href="#thumb0"/></svg>
<div class="t" style="left:498.50px;top:363.56px;font-size:10.5px;line-height:14px;height:14px;color:#1a1a1a;transform:scaleX(1.0868);">Screenshot_2019052...</div>
<svg class="abs" style="left:406.9px;top:405.6px" width="50.6" height="30.4"><use href="#thumb0"/></svg>
<div class="t" style="left:373.20px;top:447.26px;font-size:10.5px;line-height:14px;height:14px;color:#1a1a1a;transform:scaleX(1.0868);">Screenshot_2019052...</div>
<svg class="abs" style="left:532.2px;top:405.6px" width="50.6" height="30.4"><use href="#thumb2"/></svg>
<div class="t" style="left:498.50px;top:447.26px;font-size:10.5px;line-height:14px;height:14px;color:#1a1a1a;transform:scaleX(1.0868);">Screenshot_2019052...</div>
<svg class="abs" style="left:679.4px;top:149.4px" width="48" height="43"><use href="#fold"/></svg>
<div class="t" style="left:681.70px;top:197.06px;font-size:10.5px;line-height:14px;height:14px;color:#1a1a1a;transform:scaleX(1.0472);">InfoBase</div>
<div class="abs" style="left:679.2px;top:209.4px;width:48.4px;height:1px;background:#7aa5d6"></div>
<div class="t" style="left:133.20px;top:587.96px;font-size:10.5px;line-height:14px;height:14px;color:#1a1a1a;transform:scaleX(1.0920);">Документы</div>
<svg class="abs" style="left:815px;top:582px" width="120" height="24" viewBox="815 582 120 24">
<path d="M828.3 596.3 L832.3 600.2" stroke="#1d3f5c" stroke-width="1.8" stroke-linecap="round"/>
<circle cx="825.2" cy="593.1" r="4.1" fill="#3ea6ef" stroke="#1d3f5c" stroke-width="1.3"/>
<rect x="823" y="592.5" width="4.4" height="1.3" fill="#fff"/>
<rect x="844" y="589" width="63" height="5" rx="2.5" fill="#b3b3b3"/>
<rect x="844" y="589" width="47" height="5" rx="2.5" fill="#698db3"/>
<circle cx="890.5" cy="591.5" r="6.3" fill="#dfe1e6" stroke="#a9a9a9" stroke-width="1"/>
<path d="M926 596.6 L930 600.5" stroke="#1d3f5c" stroke-width="1.8" stroke-linecap="round"/>
<circle cx="922.9" cy="593.4" r="4.1" fill="#3ea6ef" stroke="#1d3f5c" stroke-width="1.3"/>
<path d="M920.6 593.4 H925.2 M922.9 591.1 V595.7" stroke="#fff" stroke-width="1.4"/>
</svg>
<svg class="abs" style="left:985px;top:605px" width="165" height="58" viewBox="985 605 165 58">
<rect x="993.6" y="619.2" width="148" height="36.8" rx="8.5" fill="none" stroke="#fff" stroke-width="2.2"/>
<rect x="1061.5" y="616" width="12" height="6" fill="#4b6f8e"/>
<path d="M1067.5 609.6 L1069.3 614.9 L1074.9 615 L1070.4 618.4 L1072 623.8 L1067.5 620.6 L1063 623.8 L1064.6 618.4 L1060.1 615 L1065.7 614.9 Z" fill="#c3d1dd" stroke="#f4f7fa" stroke-width="0.9"/>
<circle cx="1131.5" cy="631.3" r="2" fill="none" stroke="#e8eef3" stroke-width="0.6"/>
</svg>
<div class="t" style="left:1007.20px;top:621.66px;font-size:25.5px;line-height:33px;height:33px;color:#fff;transform:scaleX(0.7575);">ASTRALINUX</div>
<div class="abs" style="left:0;top:724px;width:1280px;height:38px;background:#4b7395"></div>
<svg class="abs" style="left:0;top:724px" width="232" height="38" viewBox="0 724 232 38">
<path d="M19.05 731.70 L22.17 739.59 L30.11 740.34 L24.09 745.96 L25.88 754.31 L19.05 749.90 L12.22 754.31 L14.01 745.96 L7.99 740.34 L15.93 739.59 Z" fill="none" stroke="#fff" stroke-width="1.15" stroke-linejoin="miter"/>
<clipPath id="stc"><path d="M19.05 735.45 L21.23 740.97 L26.79 741.50 L22.58 745.43 L23.83 751.28 L19.05 748.19 L14.27 751.28 L15.52 745.43 L11.31 741.50 L16.87 740.97 Z"/></clipPath>
<path d="M19.05 735.45 L21.23 740.97 L26.79 741.50 L22.58 745.43 L23.83 751.28 L19.05 748.19 L14.27 751.28 L15.52 745.43 L11.31 741.50 L16.87 740.97 Z" fill="#f2f6f9"/>
<g clip-path="url(#stc)" stroke="#4b7395" stroke-width="0.95"><path d="M3.0 738 L13.0 756 M5.2 738 L15.2 756 M7.4 738 L17.4 756 M9.6 738 L19.6 756 M11.8 738 L21.8 756 M14.0 738 L24.0 756 M16.2 738 L26.2 756"/></g>
<rect x="45.5" y="733.5" width="25" height="22" rx="2.5" fill="none" stroke="#c9d6e1" stroke-width="1"/>
<rect x="46" y="752.2" width="24" height="3.2" fill="#c9d6e1"/><rect x="46" y="752" width="24" height="1" fill="#f2f6f9"/>
<g fill="#fff"><circle cx="48.2" cy="737" r="1.2"/><circle cx="51.6" cy="737" r="1.2"/><circle cx="55" cy="737" r="1.2"/><circle cx="48.2" cy="740.1" r="1.2"/><circle cx="51.6" cy="740.1" r="1.2"/><circle cx="55" cy="740.1" r="1.2"/><circle cx="48.2" cy="743.2" r="1.2"/><circle cx="51.6" cy="743.2" r="1.2"/></g>
<rect x="90.5" y="734.5" width="20" height="17" rx="2" fill="none" stroke="#e8eef3" stroke-width="1"/>
<rect x="85.5" y="738" width="20" height="17.5" rx="2" fill="#4b7395" stroke="#e8eef3" stroke-width="1"/>
<path d="M86 740.5 H105" stroke="#e8eef3" stroke-width="1"/>
<circle cx="138" cy="742.8" r="12.4" fill="none" stroke="#e8eef3" stroke-width="1"/>
<rect x="131" y="735" width="14" height="15.5" rx="2.5" fill="none" stroke="#e8eef3" stroke-width="1.2"/>
<path d="M131 742.8 H145 M136 739 H140 M136 746.8 H140" stroke="#e8eef3" stroke-width="1.2"/>
<rect x="167" y="724" width="31.5" height="18.5" fill="#8eabc7"/>
<rect x="167.5" y="724.5" width="62" height="36" fill="none" stroke="#e8eef3" stroke-width="1"/>
<path d="M198.5 724.5 V760.5 M167.5 742.5 H229.5" stroke="#e8eef3" stroke-width="1"/>
</svg>

<div class="t" style="left:170.30px;top:731.06px;font-size:10.5px;line-height:14px;height:14px;color:#1a1a1a;transform:scaleX(1.1000);">1</div>
<div class="t" style="left:201.30px;top:730.66px;font-size:10.5px;line-height:14px;height:14px;color:#fff;transform:scaleX(1.1000);">2</div>
<div class="t" style="left:170.00px;top:748.96px;font-size:10.5px;line-height:14px;height:14px;color:#fff;transform:scaleX(1.1000);">3</div>
<div class="t" style="left:201.30px;top:748.96px;font-size:10.5px;line-height:14px;height:14px;color:#fff;transform:scaleX(1.1000);">4</div>
<div class="abs" style="left:170px;top:725px;width:19.2px;height:13px;background:#ff0000"></div>
<div class="abs" style="left:233px;top:724px;width:126px;height:38px;background:#8eabc7"></div>
<svg class="abs" style="left:237px;top:732.4px" width="24" height="22.5" viewBox="0 0 24 23">
<path d="M0.5 3 Q0.5 0.5 3 0.5 L8 0.5 L10 3 L0.5 3.5 Z" fill="#d9b848"/>
<rect x="0.5" y="2.6" width="23" height="19.6" rx="2" fill="#ffdd55" stroke="#e5c446" stroke-width=".8"/>
<path d="M7.5 5.5 L15.5 5.5 L18 8 L18 19.5 L5.5 19.5 L5.5 7.5 Z" fill="#14485a"/>
<path d="M8 11 H15.6 M8 13.7 H15.6 M8 16.4 H15.6" stroke="#e8efe8" stroke-width="1.3"/>
</svg>
<div class="t" style="left:262.30px;top:735.78px;font-size:11.6px;line-height:15px;height:15px;font-weight:bold;color:#111;transform:scaleX(1.1228);">Документы ...</div>
<svg class="abs" style="left:363.2px;top:732.2px" width="25" height="21" viewBox="0 0 25 21">
<rect x="0.5" y="0.5" width="24" height="20" rx="2" fill="#2f4a68"/>
<rect x="2" y="4" width="21" height="14.5" fill="#3ea6ef"/>
<path d="M3.5 11.5 H7.5 L9.5 7.5 L12 15 L14 10.3 L15.2 11.5 H17.5 M19 11.5 H21.5" stroke="#fff" stroke-width="1.3" fill="none"/>
</svg>
<div class="t" style="left:390.70px;top:735.82px;font-size:11.5px;line-height:15px;height:15px;color:#fff;transform:scaleX(1.0483);">Системный ...</div>
<svg class="abs" style="left:491px;top:730px" width="26" height="25.3" viewBox="0 0 38 37"><use href="#ffox"/></svg>
<div class="t" style="left:518.80px;top:735.82px;font-size:11.5px;line-height:15px;height:15px;color:#fff;transform:scaleX(1.0740);">Записки IT ...</div>
<svg class="abs" style="left:1085px;top:726px" width="100" height="34" viewBox="1085 726 100 34">
<rect x="1092" y="732.5" width="14" height="16.5" rx="1.5" fill="none" stroke="#e8eef3" stroke-width="1.2"/>
<path d="M1092 741 H1098" stroke="#e8eef3" stroke-width="1.2"/>
<rect x="1099.5" y="740.5" width="13" height="8.5" rx="1" fill="#4b7395" stroke="#e8eef3" stroke-width="1.2"/>
<path d="M1103 744.5 L1105.3 746.8 L1109 743" stroke="#e8eef3" stroke-width="1.1" fill="none"/>
<path d="M1103 751.3 H1109" stroke="#e8eef3" stroke-width="1.3"/>
<path d="M1124.5 739 H1128 L1133.5 734.2 V750.5 L1128 746 H1124.5 Z" fill="none" stroke="#e8eef3" stroke-width="1.2" stroke-linejoin="round"/>
<path d="M1137 739 V746" stroke="#e8eef3" stroke-width="1.2"/>
<circle cx="1165.5" cy="742.5" r="11.3" fill="none" stroke="#e8eef3" stroke-width="1.3"/>
<path d="M1158 742.8 H1172.5 M1169.8 740.3 L1172.8 742.8 L1169.8 745.3 M1160.5 742.8 L1164.5 738.6 H1167.5 M1162.5 742.8 L1166 746.8 H1169" stroke="#e8eef3" stroke-width="1.4" fill="none"/>
<circle cx="1158.6" cy="742.8" r="1.4" fill="#e8eef3"/><circle cx="1168" cy="738.6" r="1.2" fill="#e8eef3"/><rect x="1168.3" y="745.7" width="2.2" height="2.2" fill="#e8eef3"/>
</svg>

<div class="t" style="left:1189.00px;top:735.42px;font-size:11.2px;line-height:15px;height:15px;color:#e8eef3;transform:scaleX(0.9962);">EN</div>
<div class="t" style="left:1223.00px;top:727.97px;font-size:14.8px;line-height:19px;height:19px;color:#fff;transform:scaleX(1.1611);-webkit-text-stroke:0.35px #fff;">22:39</div>
<div class="t" style="left:1215.50px;top:742.87px;font-size:9.6px;line-height:12px;height:12px;color:#f0f4f8;transform:scaleX(1.2081);">Вс, 26 май</div>
</body></html>
